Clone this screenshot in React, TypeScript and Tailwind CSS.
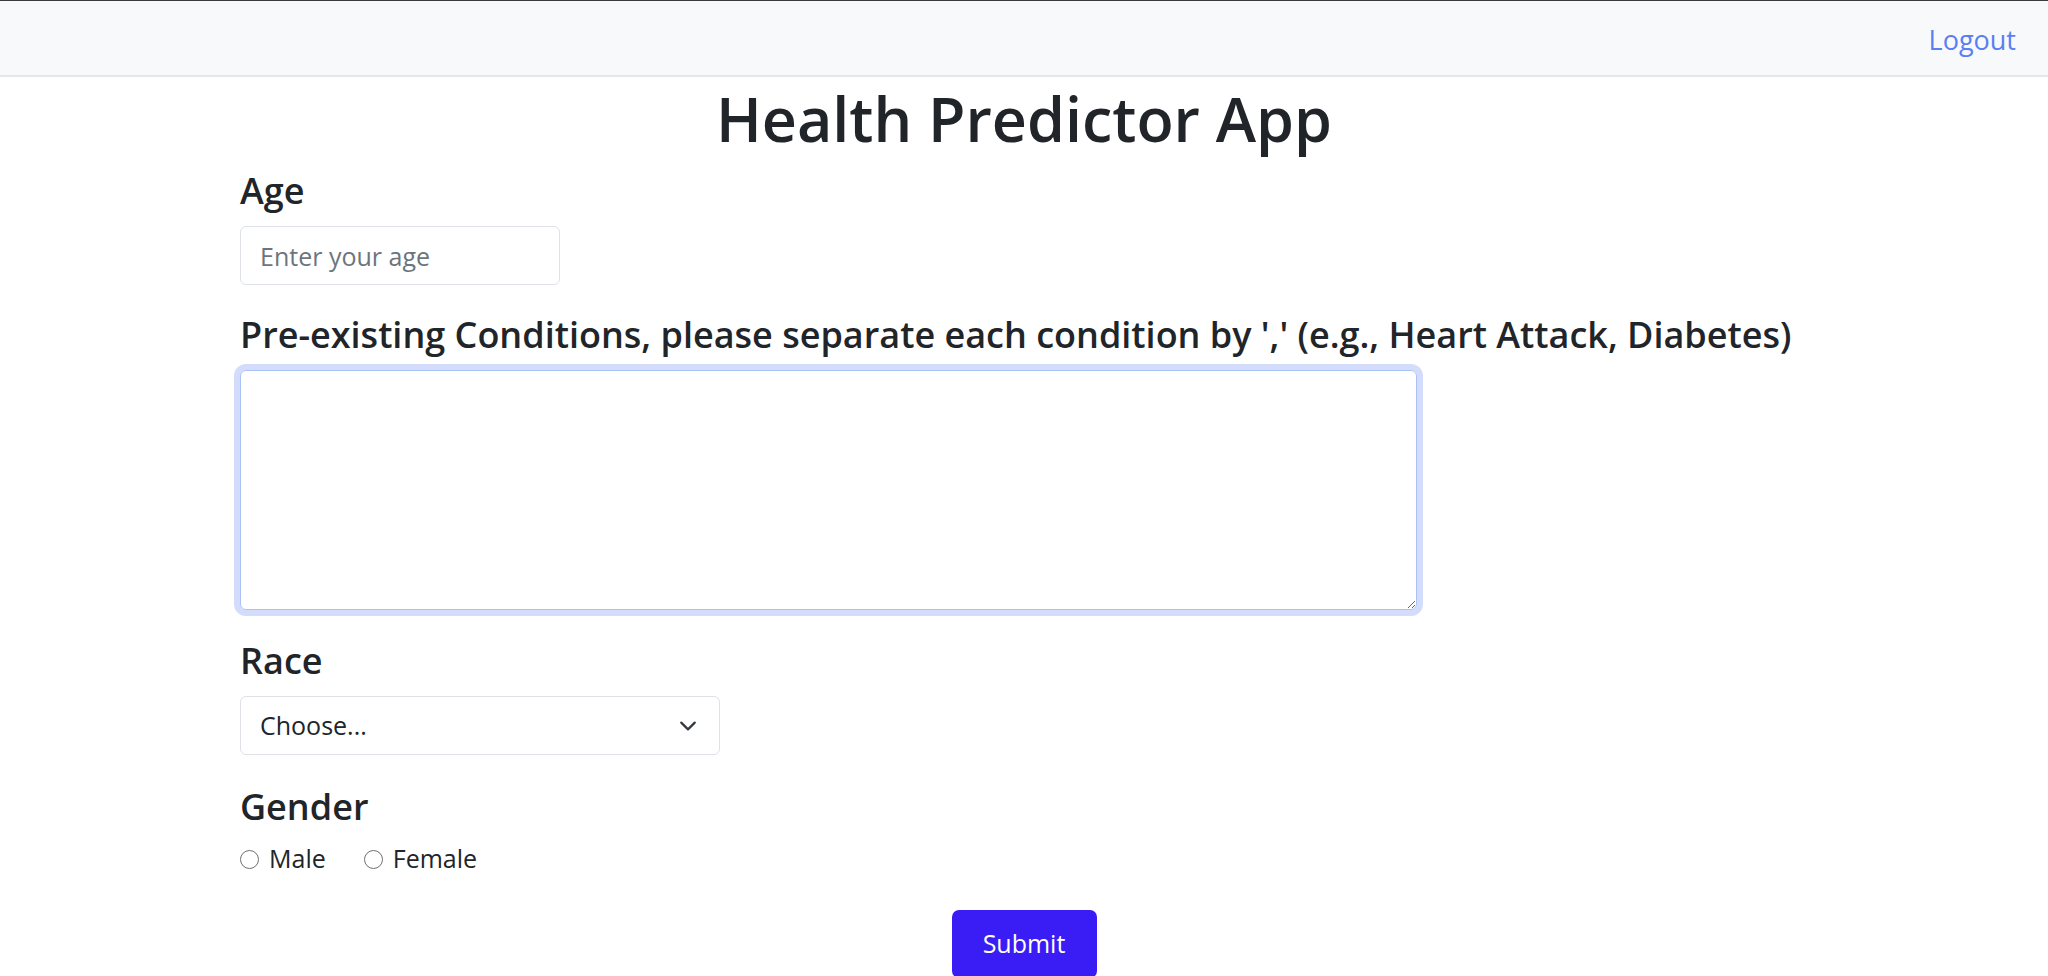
import { useState } from "react";

const fontStack = { fontFamily: '"Open Sans", "Noto Sans", sans-serif' };

const NavBar = () => (
    <nav className="flex items-center justify-end h-[77px] pt-[3px] px-[32px] bg-[#f8f9fa] border-t border-[#3a3a3a] border-b-2 border-b-[#e6e6e6]">
        <a href="#" className="text-[27px] text-[#5a7ff3] leading-none">
            Logout
        </a>
    </nav>
);

const App = () => {
    const [age, setAge] = useState("");
    const [conditions, setConditions] = useState("");
    const [race, setRace] = useState("");
    const [gender, setGender] = useState("");

    return (
        <div className="min-h-screen bg-white text-[#212529]" style={fontStack}>
            <NavBar />
            <h1 className="mt-[5px] text-center text-[61px] leading-[74px] font-semibold">
                Health Predictor App
            </h1>
            <form
                className="flex flex-col pl-[240px] pt-[16px]"
                onSubmit={(e) => e.preventDefault()}
            >
                <label className="text-[36px] leading-[38px] font-semibold">Age</label>
                <input
                    type="number"
                    placeholder="Enter your age"
                    value={age}
                    onChange={({ target: { value } }) => setAge(value)}
                    className="mt-[16px] w-[320px] h-[59px] px-[19px] text-[25px] border border-[#dee2e6] rounded-[6px] placeholder:text-[#6c757d] outline-none"
                />

                <label className="mt-[31px] text-[36px] leading-[38px] font-semibold">
                    Pre-existing Conditions, please separate each condition by ',' (e.g., Heart Attack, Diabetes)
                </label>
                <textarea
                    value={conditions}
                    onChange={({ target: { value } }) => setConditions(value)}
                    className="mt-[16px] w-[1177px] h-[240px] px-[19px] py-[9px] text-[25px] border border-[#a9c0f8] rounded-[6px] shadow-[0_0_0_6px_#d3dcfb] outline-none"
                />

                <label className="mt-[32px] text-[36px] leading-[38px] font-semibold">Race</label>
                <div className="relative mt-[16px] w-[480px]">
                    <select
                        value={race}
                        onChange={({ target: { value } }) => setRace(value)}
                        className="w-full h-[59px] pl-[19px] pr-[60px] text-[25px] text-[#212529] bg-white border border-[#dee2e6] rounded-[6px] appearance-none outline-none"
                    >
                        <option value="">Choose...</option>
                        <option value="white">White</option>
                        <option value="black">Black</option>
                        <option value="asian">Asian</option>
                        <option value="hispanic">Hispanic</option>
                        <option value="other">Other</option>
                    </select>
                    <svg
                        className="absolute right-[23px] top-[21px] pointer-events-none"
                        width="18"
                        height="18"
                        viewBox="0 0 16 16"
                        fill="none"
                        stroke="#343a40"
                        strokeWidth="2"
                        strokeLinecap="round"
                        strokeLinejoin="round"
                    >
                        <path d="m2 5 6 6 6-6" />
                    </svg>
                </div>

                <label className="mt-[33px] text-[36px] leading-[38px] font-semibold">Gender</label>
                <div className="flex items-center gap-[38px] mt-[14px] h-[38px] text-[25px]">
                    {["Male", "Female"].map((g) => (
                        <label key={g} className="flex items-center gap-[10px]">
                            <input
                                type="radio"
                                name="gender"
                                value={g}
                                checked={gender === g}
                                onChange={() => setGender(g)}
                                className="w-[19px] h-[19px] appearance-none rounded-full border-[1.5px] border-[#6f6f6f] bg-white checked:border-[6px] checked:border-[#3a1cf5]"
                            />
                            <span>{g}</span>
                        </label>
                    ))}
                </div>

                <div className="flex justify-center -ml-[240px] mt-[32px] pb-10">
                    <button
                        type="submit"
                        className="w-[145px] h-[68px] text-[25px] text-white bg-[#3a1cf5] rounded-[7px]"
                    >
                        Submit
                    </button>
                </div>
            </form>
        </div>
    );
};

export default App;
